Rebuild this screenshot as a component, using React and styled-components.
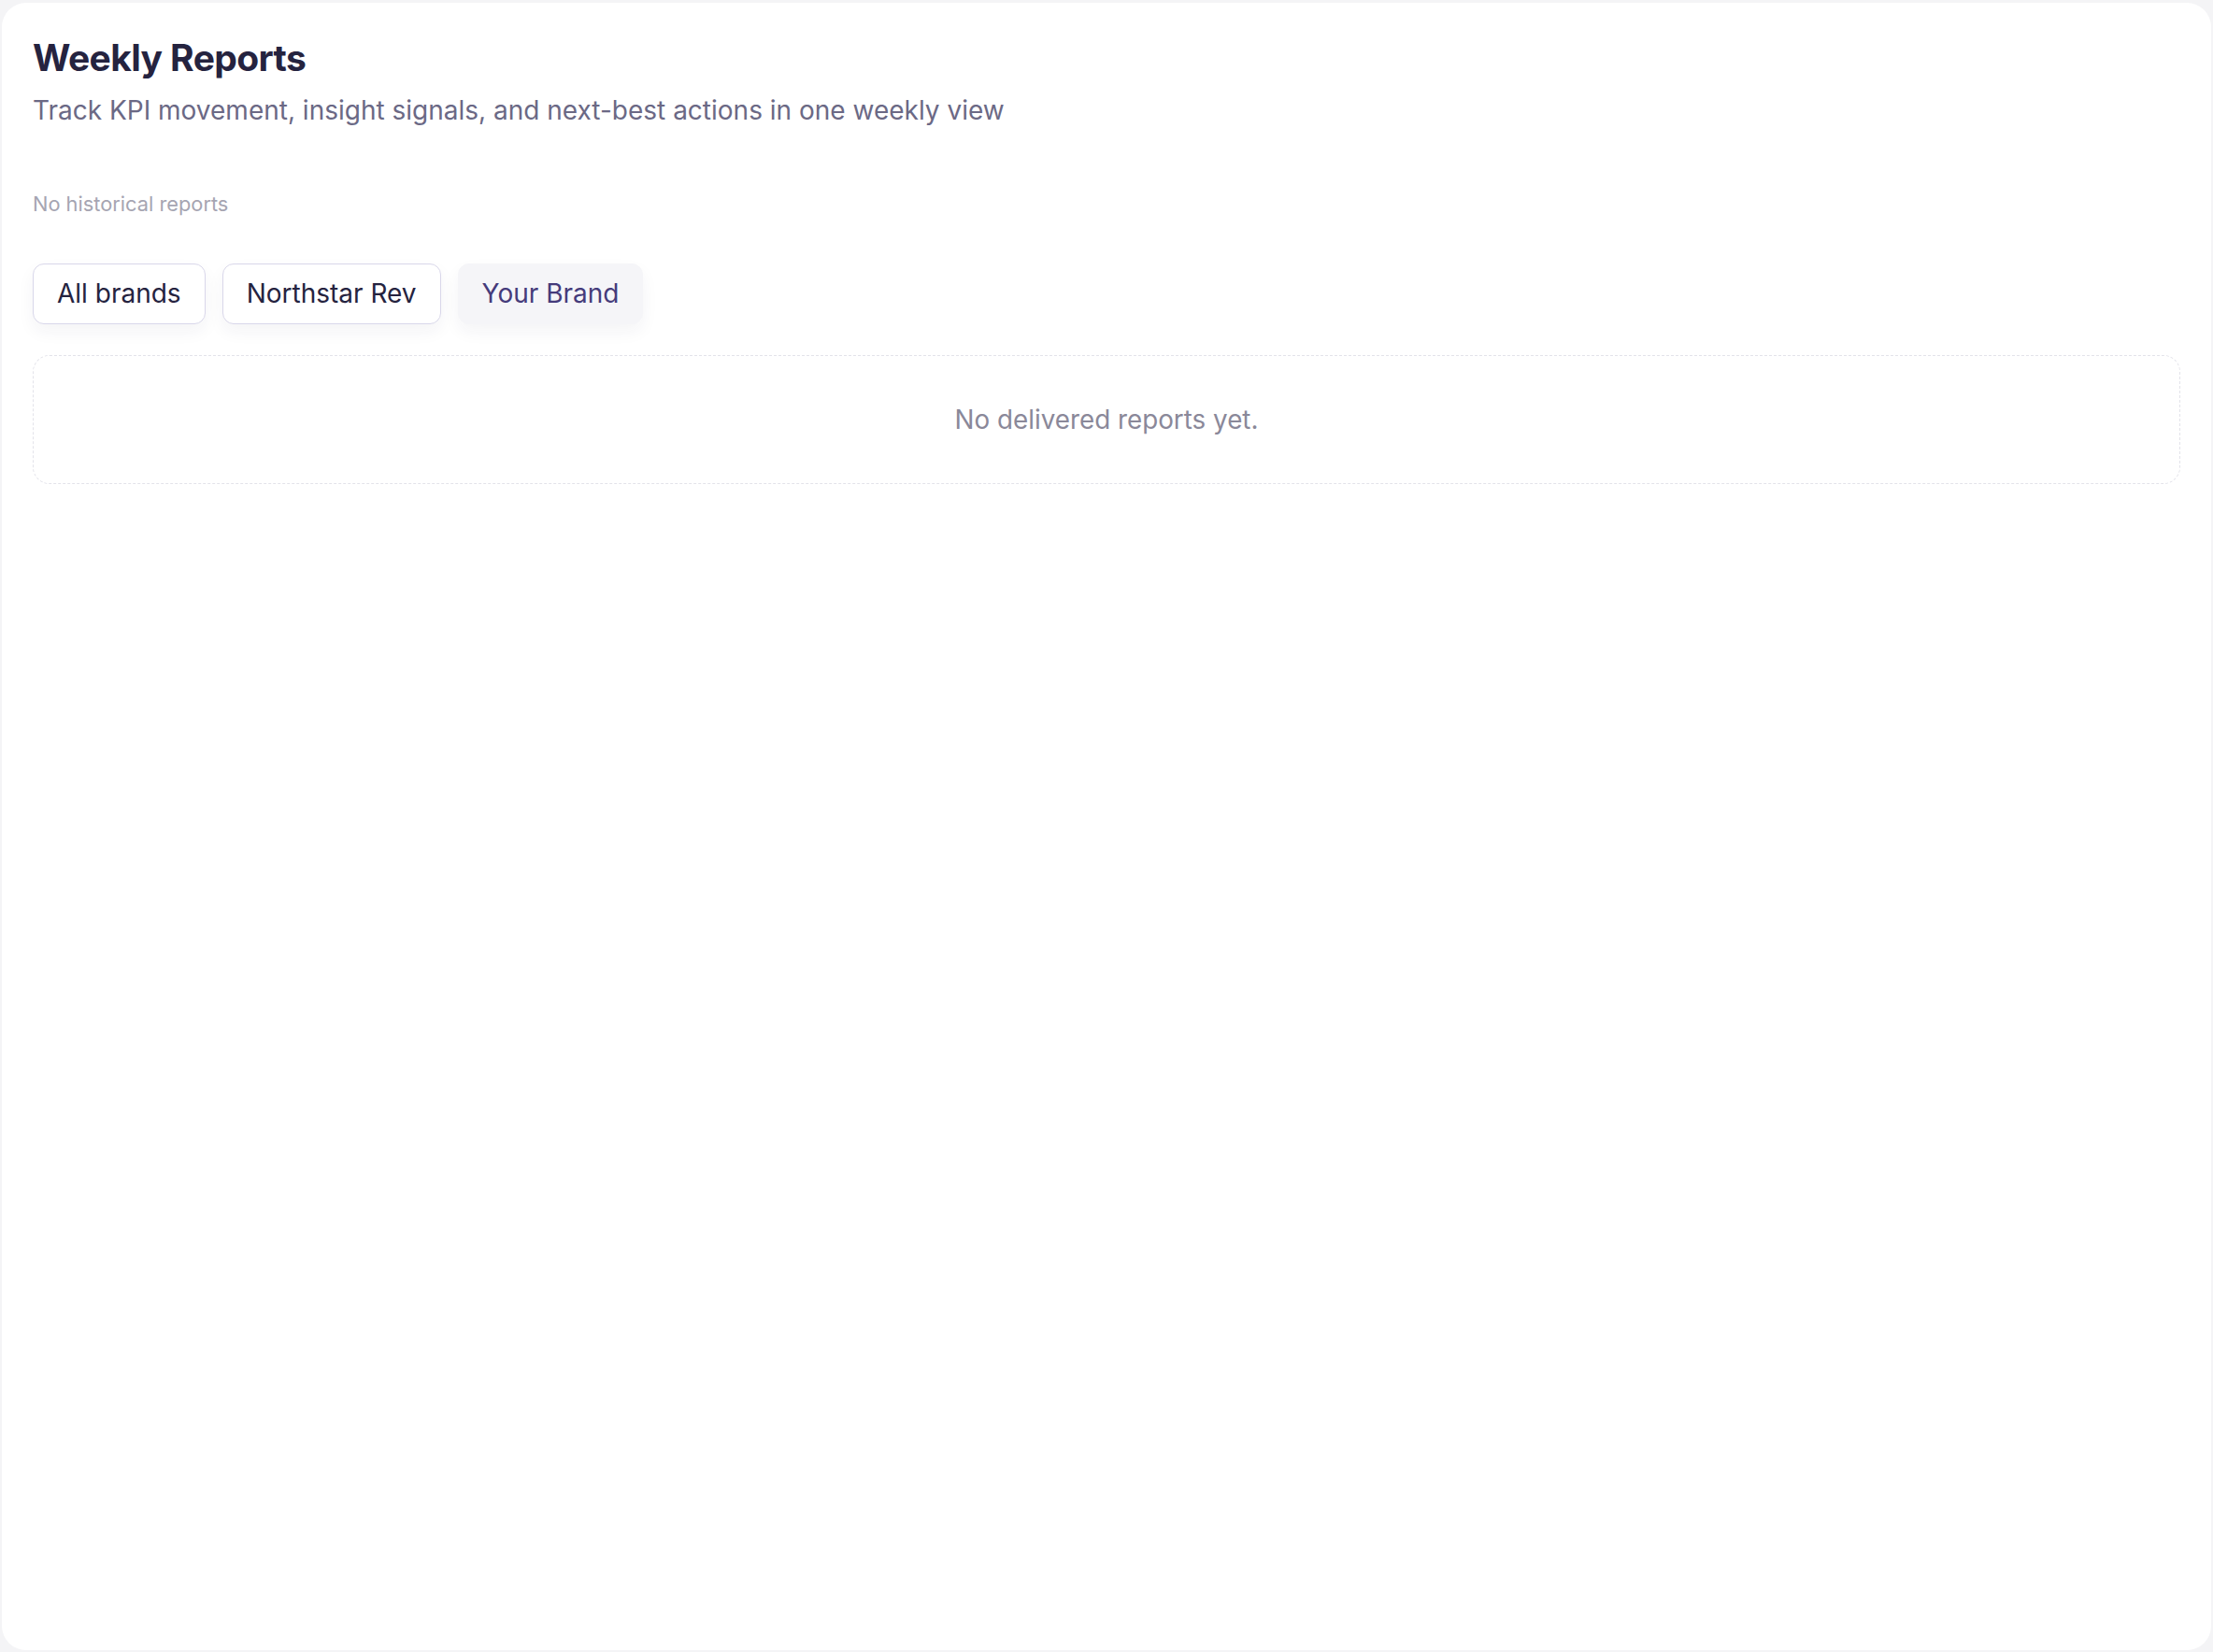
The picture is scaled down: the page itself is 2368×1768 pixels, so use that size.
import React, { useState } from "react";
import styled, { createGlobalStyle } from "styled-components";

const GlobalStyle = createGlobalStyle`
  html, body {
    margin: 0;
    padding: 0;
    background: #f4f4f6;
    font-family: Inter, "Noto Sans", "Liberation Sans", sans-serif;
  }
  * {
    box-sizing: border-box;
  }
`;

const Page = styled.div`
  padding: 3px 2px 2px 2px;
  min-height: 100vh;
`;

const Card = styled.div`
  background: #ffffff;
  border-radius: 26px;
  min-height: calc(100vh - 5px);
  padding: 36px 33px 33px 33px;
  display: flex;
  flex-direction: column;
`;

const Title = styled.h1`
  margin: 0;
  font-size: 39px;
  line-height: 1.2;
  font-weight: 700;
  letter-spacing: -0.6px;
  color: #25233f;
`;

const Subtitle = styled.p`
  margin: 12px 0 0 0;
  font-size: 28px;
  line-height: 1.45;
  color: #6b6985;
`;

const History = styled.div`
  margin-top: 64px;
  font-size: 21.8px;
  line-height: 1.5;
  color: #a6a5b2;
`;

const Tabs = styled.div`
  margin-top: 47px;
  display: flex;
  gap: 18px;
`;

const Tab = styled.button`
  font-family: inherit;
  font-size: 28px;
  line-height: 1.4;
  padding: 12px 25px;
  border-radius: 12px;
  border: 1.5px solid ${(p) => (p.active ? "#f5f5f8" : "#d9d7ea")};
  background: ${(p) => (p.active ? "#f5f5f8" : "#ffffff")};
  color: ${(p) => (p.active ? "#453b7b" : "#25233f")};
  box-shadow: 0 8px 18px rgba(40, 40, 80, 0.05);
  cursor: pointer;
`;

const Empty = styled.div`
  margin-top: 33px;
  height: 138px;
  border: 1.5px dashed #e3e3ea;
  border-radius: 18px;
  display: flex;
  align-items: center;
  justify-content: center;
  font-size: 27.8px;
  color: #8a8899;
`;

const brands = ["All brands", "Northstar Rev", "Your Brand"];

export default function App() {
  const [active, setActive] = useState("Your Brand");

  return (
    <Page>
      <GlobalStyle />
      <Card>
        <Title>Weekly Reports</Title>
        <Subtitle>
          Track KPI movement, insight signals, and next-best actions in one weekly view
        </Subtitle>
        <History>No historical reports</History>
        <Tabs>
          {brands.map((b) => (
            <Tab key={b} active={active === b} onClick={() => setActive(b)}>
              {b}
            </Tab>
          ))}
        </Tabs>
        <Empty>No delivered reports yet.</Empty>
      </Card>
    </Page>
  );
}
